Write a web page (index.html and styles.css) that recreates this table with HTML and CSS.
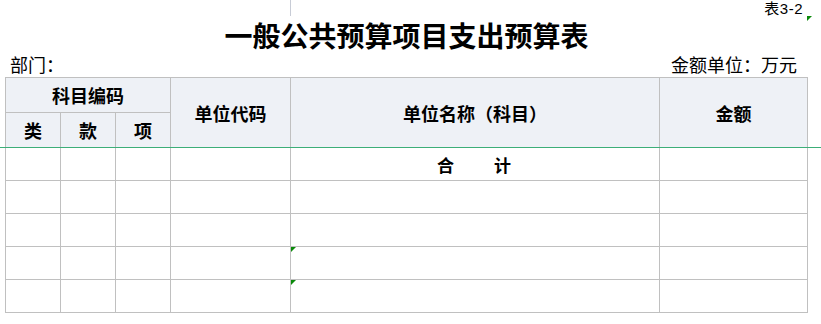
FILE: index.html
```html
<!DOCTYPE html>
<html lang="zh-CN">
  <head>
    <meta charset="UTF-8" />
    <meta name="viewport" content="width=device-width, initial-scale=1.0" />
    <title>一般公共预算项目支出预算表</title>
    <link rel="stylesheet" href="styles.css">
  </head>
  <body>
    <div class="sheet">
      <div class="topbar">
        <div class="topbar-grid"></div>
        <div class="table-no">表3-2</div>
      </div>
      <span class="flag flag-top"></span>

      <h1 class="title">一般公共预算项目支出预算表</h1>

      <div class="meta">
        <span>部门：</span>
        <span>金额单位：万元</span>
      </div>

      <table class="budget">
        <colgroup>
          <col class="c-code" />
          <col class="c-code" />
          <col class="c-code" />
          <col class="c-unit" />
          <col class="c-name" />
          <col class="c-amount" />
        </colgroup>
        <thead>
          <tr class="head-row">
            <th colspan="3">科目编码</th>
            <th rowspan="2">单位代码</th>
            <th rowspan="2">单位名称（科目）</th>
            <th rowspan="2">金额</th>
          </tr>
          <tr class="head-row">
            <th>类</th>
            <th>款</th>
            <th>项</th>
          </tr>
        </thead>
        <tbody>
          <tr>
            <td></td><td></td><td></td><td></td>
            <td class="total">合&emsp;&emsp;计</td>
            <td></td>
          </tr>
          <tr>
            <td></td><td></td><td></td><td></td><td></td><td></td>
          </tr>
          <tr>
            <td></td><td></td><td></td><td></td><td></td><td></td>
          </tr>
          <tr>
            <td></td><td></td><td></td><td></td>
            <td class="marked"><span class="flag"></span></td>
            <td></td>
          </tr>
          <tr>
            <td></td><td></td><td></td><td></td>
            <td class="marked"><span class="flag"></span></td>
            <td></td>
          </tr>
        </tbody>
      </table>

      <!-- frozen pane divider under the header -->
      <div class="freeze-line"></div>
    </div>
  </body>
</html>
```

FILE: styles.css
```css
/* Sheet layout */
body {
  margin: 0;
  background: #fff;
  font-family: "Noto Sans CJK SC", "Noto Sans", sans-serif;
  color: #000;
}

.sheet {
  position: relative;
  width: 821px;
  height: 324px;
  overflow: hidden;
}

.topbar {
  display: flex;
  height: 16px;
}

.topbar-grid {
  width: 291px;
  box-sizing: border-box;
  border-right: 1px solid #c8ccd6;
}

.table-no {
  margin-left: auto;
  padding-right: 18px;
  font-family: "Liberation Sans", "Noto Sans CJK SC", sans-serif;
  font-size: 15px;
  line-height: 17px;
  letter-spacing: 0.5px;
}

.flag {
  position: absolute;
  width: 5px;
  height: 5px;
  background: #0a8a0a;
  clip-path: polygon(0 0, 100% 0, 0 100%);
}

.flag-top {
  left: 807px;
  top: 16px;
}

.title {
  margin: 0 0 0 5px;
  width: 803px;
  height: 38px;
  text-align: center;
  font-size: 28px;
  line-height: 38px;
  font-weight: 700;
}

.meta {
  display: flex;
  justify-content: space-between;
  margin: 0 0 3px 0;
  padding: 0 24px 0 10px;
  height: 20px;
  font-size: 18px;
  line-height: 20px;
}

/* Budget table */
.budget {
  margin-left: 5px;
  width: 803px;
  table-layout: fixed;
  border-collapse: separate;
  border-spacing: 0;
  border-left: 1px solid #c0c0c0;
  border-top: 1px solid #c0c0c0;
}

.c-code {
  width: 55px;
}

.c-unit {
  width: 120px;
}

.c-name {
  width: 369px;
}

.c-amount {
  width: 148px;
}

.budget th,
.budget td {
  padding: 0;
  border-right: 1px solid #c0c0c0;
  border-bottom: 1px solid #c0c0c0;
  text-align: center;
  vertical-align: middle;
}

.budget th {
  background: #eef1f6;
  font-size: 18px;
  font-weight: 700;
  line-height: 20px;
}

.head-row {
  height: 35px;
}

.budget tbody tr {
  height: 33px;
}

.total {
  font-size: 17px;
  font-weight: 700;
  letter-spacing: 2px;
}

.marked {
  position: relative;
}

.marked .flag {
  left: 0;
  top: 0;
}

.freeze-line {
  position: absolute;
  left: 0;
  right: 0;
  top: 147px;
  height: 1px;
  background: #3cae78;
}
```
